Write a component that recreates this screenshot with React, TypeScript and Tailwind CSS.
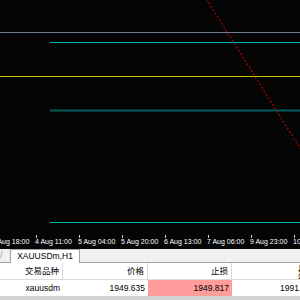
import React from "react";

const ticks = [
  "3 Aug 18:00",
  "4 Aug 11:00",
  "5 Aug 04:00",
  "5 Aug 20:00",
  "6 Aug 13:00",
  "7 Aug 06:00",
  "9 Aug 23:00",
  "10 Aug 16:00",
];

function Chart() {
  return (
    <div className="relative h-[235px] w-full overflow-hidden bg-[#050505]">
      <svg width="300" height="235" className="absolute left-0 top-0">
        <line x1="0" y1="32.5" x2="300" y2="32.5" stroke="#6f7f8f" strokeWidth="1" />
        <line x1="50" y1="42.5" x2="300" y2="42.5" stroke="#00b2b2" strokeWidth="1" />
        <line x1="0" y1="76.5" x2="300" y2="76.5" stroke="#c8c400" strokeWidth="1" />
        <line x1="50" y1="110.5" x2="300" y2="110.5" stroke="#005e5e" strokeWidth="2" />
        <line x1="50" y1="222.5" x2="300" y2="222.5" stroke="#00b2b2" strokeWidth="1" />
        <line
          x1="206.5"
          y1="-1"
          x2="300.5"
          y2="149"
          stroke="#b00000"
          strokeWidth="1.2"
          strokeDasharray="2 2"
        />
      </svg>
    </div>
  );
}

function TimeAxis() {
  return (
    <div className="h-[14px] w-full overflow-hidden bg-[#050505]">
      <div className="ml-[-8px] flex">
        {ticks.map((t) => (
          <div key={t} className="relative h-[14px] w-[43px] shrink-0">
            <div className="absolute left-[0.5px] top-0 h-[3px] w-px bg-[#cfcfcf]" />
            <span className="absolute left-0 top-[2px] whitespace-nowrap text-[7px] leading-[9px] text-white">
              {t}
            </span>
          </div>
        ))}
      </div>
    </div>
  );
}

function TabBar() {
  return (
    <div className="relative flex h-[14px] items-end bg-[#f0f0f0] border-b border-[#a0a0a0]">
      <span className="absolute left-0 top-[1px] text-[9px] leading-[11px] text-[#9a9a9a]">/</span>
      <div className="ml-[10px] mb-[-1px] flex h-[14px] w-[70px] items-center justify-center border border-b-0 border-[#a0a0a0] bg-white text-[8.5px] text-black">
        XAUUSDm,H1
      </div>
    </div>
  );
}

function Table() {
  const cell = "flex h-[16px] items-center justify-end pr-[3px] shrink-0";
  return (
    <div className="flex flex-col bg-white text-[8.5px] leading-none text-black">
      <div className="flex border-b border-[#dadada]">
        <div className={`${cell} w-[63px] border-r border-[#dadada]`}>交易品种</div>
        <div className={`${cell} w-[85px] border-r border-[#dadada]`}>价格</div>
        <div className={`${cell} w-[84px] border-r border-[#dadada]`}>止损</div>
        <div className={`${cell} w-[80px] justify-start pl-[66px]`}>止盈</div>
      </div>
      <div className="flex">
        <div className={`${cell} w-[63px]`}>xauusdm</div>
        <div className={`${cell} w-[85px]`}>1949.635</div>
        <div className={`${cell} w-[84px] bg-[#ff9c9c]`}>1949.817</div>
        <div className={`${cell} w-[80px] justify-start pl-[48px]`}>1991.200</div>
      </div>
    </div>
  );
}

export default function App() {
  return (
    <div
      className="flex h-[300px] w-[300px] flex-col overflow-hidden bg-[#d4d4d4]"
      style={{ fontFamily: '"Liberation Sans", "Noto Sans CJK SC", sans-serif' }}
    >
      <Chart />
      <TimeAxis />
      <TabBar />
      <Table />
    </div>
  );
}
